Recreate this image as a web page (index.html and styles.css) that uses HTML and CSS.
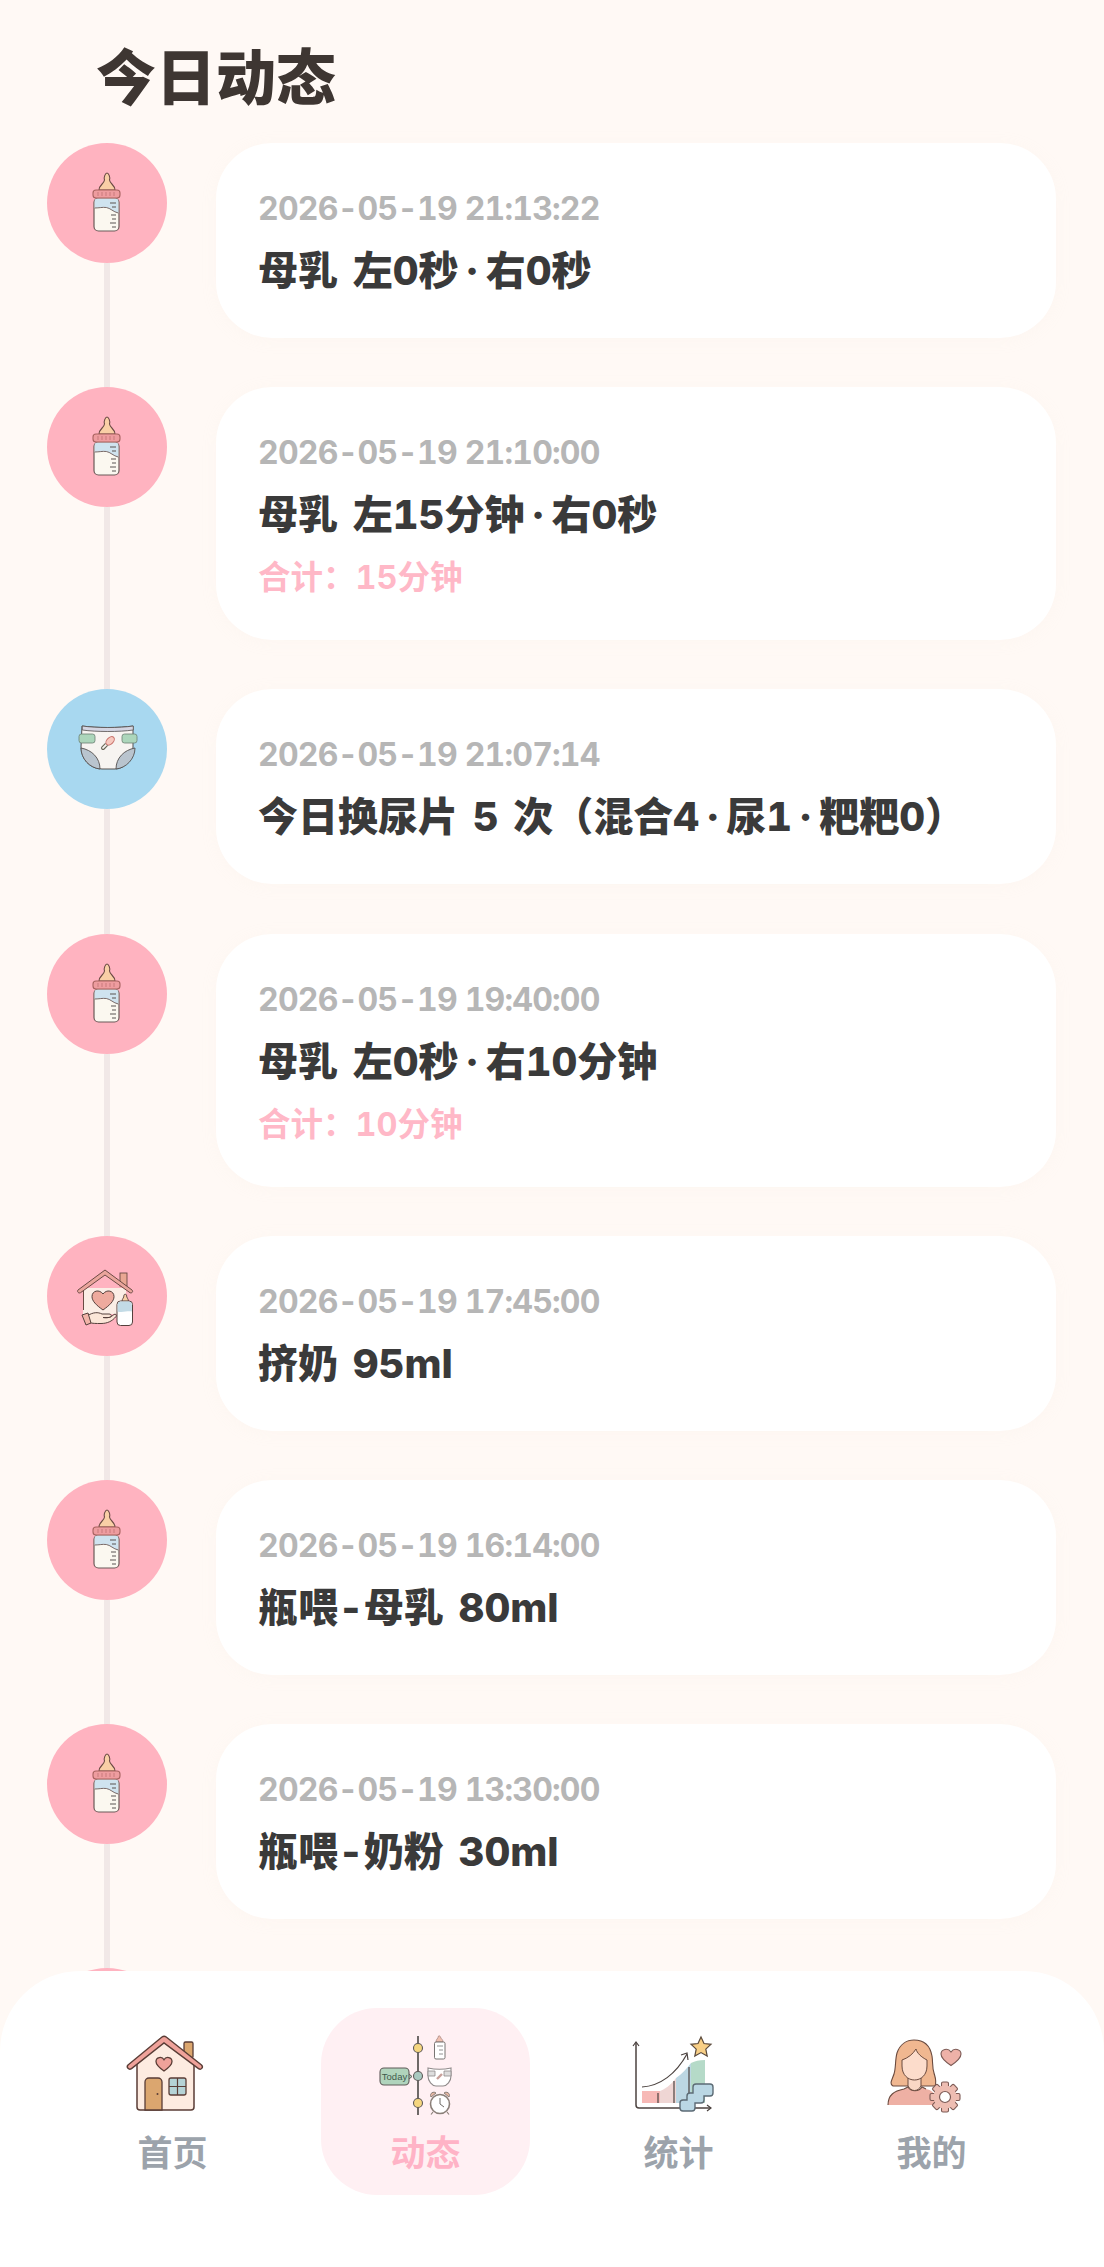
FILE: index.html
```html
<!DOCTYPE html>
<html lang="zh-CN">
<head>
<meta charset="utf-8">
<title>今日动态</title>
<link rel="stylesheet" href="styles.css">
</head>
<body>
<svg class="defs" width="0" height="0" aria-hidden="true">
  <defs>
    <symbol id="bottle" viewBox="0 0 64 64">
      <path d="M24 19c0-5 5-6 5.500-10-1-3 1-7 2.500-7s3.500 4 2.500 7c.5 4 5.500 5 5.500 10z" fill="#f9cfa6" stroke="#6b4a44" stroke-width="1.100"/>
      <rect x="19" y="27" width="25" height="33" rx="4.500" fill="#fbf8f0" stroke="#6b5a58" stroke-width="1.200"/>
      <path d="M19.700 37V30c0-1.500 1-2.500 2.500-2.500h18.600c1.500 0 2.500 1 2.500 2.500v12c-5-1-8-5-12-5.500-4-.5-7 .5-11.600.5z" fill="#cfe3ef"/>
      <path d="M19.700 37c4.600 0 7.600-1 11.600-.5 4 .5 7 4.500 12 5.500" fill="none" stroke="#6b5a58" stroke-width=".9"/>
      <path d="M35 32h6M37 36h4M36 44h5M37 48h4M35 52h6M37 56h4" stroke="#5b5552" stroke-width="1.100"/>
      <rect x="18" y="19" width="27" height="8" rx="3" fill="#ee9c9f" stroke="#a8625f" stroke-width="1.100"/>
      <path d="M23 21v4M27 21v4M31 21v4M35 21v4M39 21v4" stroke="#c97a7c" stroke-width="1"/>
    </symbol>
    <symbol id="diaper" viewBox="0 0 64 64">
      <path d="M7 9c14 2 38 2 51 0v21c0 12-8 22-18 22H27C15 52 6 42 6 30z" fill="#f7f4f1" stroke="#55504f" stroke-width="1"/>
      <path d="M7.300 9c14 2 37 2 51 0v4c-14 2-37 2-51 0z" fill="#d4d5e2" stroke="#55504f" stroke-width=".8"/>
      <path d="M6 31c0 11 9 20 19 21 0-11-8-19-19-21zM60 31c0 11-9 20-19 21 0-11 8-19 19-21z" fill="#b9c4ce" stroke="#55504f" stroke-width=".9"/>
      <rect x="4" y="17" width="16" height="9" rx="2.500" fill="#acd6bb" stroke="#6b7f72" stroke-width=".8"/>
      <rect x="47" y="17" width="15" height="9" rx="2.500" fill="#acd6bb" stroke="#6b7f72" stroke-width=".8"/>
      <g transform="rotate(-45 33 26)" fill="none" stroke="#c9756f" stroke-width="1.100">
        <ellipse cx="36" cy="26" rx="5" ry="3.200" fill="#f7c9bf"/>
        <path d="M31 24.500H26a1.500 1.500 0 0 0 0 3h5" stroke="#665"/>
      </g>
    </symbol>
    <symbol id="pump" viewBox="0 0 64 64">
      <path d="M8 24h43v26H8z" fill="#fbeee6"/>
      <path d="M8.500 26v20" stroke="#6b4a44" stroke-width="1"/>
      <rect x="45" y="9" width="7" height="13" fill="#e9a793" stroke="#6b4a44" stroke-width=".9"/>
      <path d="M3 26 30 6l27 20c1.500 1.400 0 3.600-2 2.700L30 11 5.500 28.700c-2 1-3.800-1.200-2.500-2.700z" fill="#eaa59c" stroke="#6b4a44" stroke-width="1"/>
      <path d="M28 46C21 41 17 37 17 32.500c0-6 7.500-7.500 11-2.500 3.500-5 11-3.500 11 2.500C39 37 35 41 28 46z" fill="#eeaa9e" stroke="#55403c" stroke-width="1"/>
      <path d="M12 52c6-4 11-4 15-2h7c3 0 3 3 .5 3.500H28c5 1 8-.5 11-3 1.500-1 3 .5 2 2-4 5-9 7-15 7-5 0-9 0-12-1z" fill="#fbe6d8" stroke="#55403c" stroke-width="1"/>
      <path d="M7 51l6-2 3 10-5 2z" fill="#f2b4a8" stroke="#55403c" stroke-width="1"/>
      <path d="M47 38c0-4 2-3.500 2-7 0-1 2.500-1 2.500 0 0 3.500 2 3 2 7z" fill="#f9cfa6" stroke="#55403c" stroke-width=".9"/>
      <rect x="42" y="37" width="15.500" height="24.500" rx="3.500" fill="#fff" stroke="#55403c" stroke-width="1"/>
      <path d="M42.600 41c0-2 1-3.400 3-3.400h8.300c2 0 3 1.400 3 3.400v6.500c-4-1-9.500 1.500-14.300 0z" fill="#c3dbe6"/>
    </symbol>
    <symbol id="nav-home" viewBox="0 0 96 96">
      <rect x="59" y="16" width="9" height="16" rx="1.500" fill="#dca76f" stroke="#5a3d36" stroke-width="1.300"/>
      <path d="M12 38l27-24 30 24v43a3 3 0 0 1-3 3H15a3 3 0 0 1-3-3z" fill="#fdebe0" stroke="#5a3d36" stroke-width="1.500"/>
      <path d="M20 84V56a4 4 0 0 1 4-4h9a4 4 0 0 1 4 4v28z" fill="#dba66f" stroke="#5a3d36" stroke-width="1.300"/>
      <circle cx="32.500" cy="68" r="1" fill="#5a3d36"/>
      <rect x="44" y="52" width="17" height="17" rx="2" fill="#b5d3d6" stroke="#5a3d36" stroke-width="1.300"/>
      <path d="M52.500 52v17M44 60.500h17" stroke="#5a3d36" stroke-width="1.200"/>
      <path d="M3 39 37 11c1.500-1.200 2.700-1.200 4.200 0L76.500 39c2.300 2.400-.5 5.400-3 3.600L39 17 6.500 42.600c-2.700 1.800-5.500-1.300-3.500-3.600z" fill="#efa29a" stroke="#5a3d36" stroke-width="1.400"/>
      <path d="M39 45c-5-3.500-8-6-8-9.500 0-4.500 6-5.500 8-1.800 2-3.700 8-2.700 8 1.800 0 3.500-3 6-8 9.500z" fill="#efa29a" stroke="#5a3d36" stroke-width="1.300"/>
    </symbol>
    <symbol id="nav-feed" viewBox="0 0 96 96">
      <path d="M40 10v79" stroke="#5f5a58" stroke-width="1.800"/>
      <circle cx="40" cy="22" r="4.500" fill="#f5d67f" stroke="#5f5a58" stroke-width="1.100"/>
      <circle cx="40" cy="50" r="4.500" fill="#a9c9c0" stroke="#5f5a58" stroke-width="1.100"/>
      <circle cx="40" cy="77" r="4.500" fill="#f5d67f" stroke="#5f5a58" stroke-width="1.100"/>
      <path d="M31 48l3 2.500-3 2.500" fill="#b0d4bc" stroke="#5f5a58" stroke-width="1"/>
      <rect x="2" y="42" width="29" height="17" rx="4" fill="#b0d4bc" stroke="#5f5a58" stroke-width="1.100"/>
      <text x="16.500" y="54" class="today-label" text-anchor="middle">Today</text>
      <path d="M58 16c0-3 2-3 2.500-6 1-.5 2 .5 2 1 .3 2 2.500 2 2.500 5z" fill="#f0c0b0" stroke="#a98a85" stroke-width=".8"/>
      <rect x="56.500" y="16" width="10.500" height="17" rx="1.500" fill="#fff" stroke="#6a6563" stroke-width=".9"/>
      <path d="M59 20h6M61 24h4M61 28h4" stroke="#777" stroke-width=".8"/>
      <path d="M50 42c7 1.500 16 1.500 23 0v8c0 5-4 10-8 10h-7c-4 0-8-5-8-10z" fill="#fff" stroke="#8f8a8a" stroke-width="1.100"/>
      <path d="M50 45h7v5h-7zM66 45h7v5h-7z" fill="#ddd" stroke="#8f8a8a" stroke-width=".8"/>
      <path d="M59 53l5-5" stroke="#c8a09a" stroke-width="2.400"/>
      <circle cx="62" cy="78" r="9.500" fill="#fff" stroke="#8a7f78" stroke-width="1.600"/>
      <path d="M62 72v6l4 3" fill="none" stroke="#6f6a66" stroke-width="1"/>
      <path d="M53 71c-2-4 3-6 5-4zM71 71c2-4-3-6-5-4z" fill="#e8b7a3" stroke="#8a7f78" stroke-width="1"/>
      <path d="M55 86l-2 2.500M69 86l2 2.500" stroke="#8a7f78" stroke-width="1.200"/>
    </symbol>
    <symbol id="nav-stats" viewBox="0 0 96 96">
      <path d="M45 52c6-4 11-10 15-15v40H45z" fill="#bcd7e3"/>
      <path d="M11 65h18v12H11z" fill="#f7b9b6"/>
      <path d="M29 65c5-2 10-5 16-13v25H29z" fill="#efd6d4"/>
      <path d="M60 37c4-2 8-3 14-3v43H60z" fill="#b5dac8"/>
      <path d="M27 67v10M43 55v22M58 41v36" stroke="#4c4340" stroke-width="1.200"/>
      <path d="M5 16v63a3 3 0 0 0 3 3h72" fill="none" stroke="#4c4340" stroke-width="1.500"/>
      <path d="M2 20l3-4 3 4M76 79l4 3-4 3" fill="none" stroke="#4c4340" stroke-width="1.200"/>
      <path d="M11 61c18-1 34-13 45-33" fill="none" stroke="#4c4340" stroke-width="1.200"/>
      <path d="M50 29l6-2 1 7" fill="none" stroke="#4c4340" stroke-width="1.200"/>
      <path d="M70 11l3 6.500 7 .8-5.200 4.800 1.400 7-6.200-3.500-6.200 3.500 1.400-7-5.200-4.800 7-.8z" fill="#f8cf86" stroke="#5b4a3c" stroke-width="1.200"/>
      <path d="M62 61a3 3 0 0 1 3-3h14a3 3 0 0 1 3 3v6a3 3 0 0 1-3 3h-6v4a3 3 0 0 1-3 3h-6v5a3 3 0 0 1-3 3H52a3 3 0 0 1-3-3v-5a3 3 0 0 1 3-3h4v-4a3 3 0 0 1 3-3h3z" fill="#bad7e4" stroke="#5c6b75" stroke-width="1.400"/>
    </symbol>
    <symbol id="nav-me" viewBox="0 0 96 96">
      <path d="M-8 16v56" stroke="#f5f3f2" stroke-width="1.500"/>
      <path d="M9 60c-4-2-1-6 1-12 2-6 1-14 3-21 3-9 10-13 17-13 9 0 16 5 18 16 1 6 0 11 2 17 1 4 3 8 1 13z" fill="#f0b790" stroke="#6a4a3e" stroke-width="1.100"/>
      <path d="M4 79c0-10 6-14 16-16l4-2c3 5 11 5 14 0l4 2c5 1 9 4 10 8l-1 8z" fill="#eeb0a4"/>
      <path d="M4 79c0-10 6-14 16-16l4-2c3 5 11 5 14 0l4 2" fill="none" stroke="#6a4a3e" stroke-width="1.100"/>
      <path d="M24 49h13v11c-3 6-10 6-13 0z" fill="#fad7c5" stroke="#6a4a3e" stroke-width="1"/>
      <path d="M18 34c6-2 11-6 14-11 1 4 5 8 11 11v6c0 9-6 14-12.500 14S18 49 18 40z" fill="#fcdccb" stroke="#6a4a3e" stroke-width="1"/>
      <path d="M67 39.500c-6-4-10-7.500-10-11.500 0-5 7-6.500 10-2 3-4.500 10-3 10 2 0 4-4 7.500-10 11.500z" fill="#eeb1a8" stroke="#7c5a55" stroke-width="1.100"/>
      <g fill="#eebdb2" stroke="#7c5a55" stroke-width="1.100">
        <rect x="57.500" y="56" width="7" height="30" rx="1.500"/>
        <rect x="57.500" y="56" width="7" height="30" rx="1.500" transform="rotate(45 61 71)"/>
        <rect x="57.500" y="56" width="7" height="30" rx="1.500" transform="rotate(90 61 71)"/>
        <rect x="57.500" y="56" width="7" height="30" rx="1.500" transform="rotate(135 61 71)"/>
      </g>
      <circle cx="61" cy="71" r="11.500" fill="#eebdb2"/>
      <circle cx="61" cy="71" r="5.500" fill="#fff" stroke="#7c5a55" stroke-width="1.200"/>
    </symbol>
  </defs>
</svg>

<main class="page">
  <h1 class="page-title">今日动态</h1>
  <ul class="timeline">
    <li class="event">
      <div class="dot dot-pink"><svg class="dot-icon"><use href="#bottle"/></svg></div>
      <div class="card">
        <p class="time">2026-05-19 21:13:22</p>
        <p class="desc">母乳 左0秒<span class="sep">·</span>右0秒</p>
      </div>
    </li>
    <li class="event">
      <div class="dot dot-pink"><svg class="dot-icon"><use href="#bottle"/></svg></div>
      <div class="card">
        <p class="time">2026-05-19 21:10:00</p>
        <p class="desc">母乳 左15分钟<span class="sep">·</span>右0秒</p>
        <p class="total">合计&#xFF1A;15分钟</p>
      </div>
    </li>
    <li class="event">
      <div class="dot dot-blue"><svg class="dot-icon"><use href="#diaper"/></svg></div>
      <div class="card">
        <p class="time">2026-05-19 21:07:14</p>
        <p class="desc">今日换尿片 5 次&#xFF08;混合4<span class="sep">·</span>尿1<span class="sep">·</span>粑粑0&#xFF09;</p>
      </div>
    </li>
    <li class="event">
      <div class="dot dot-pink"><svg class="dot-icon"><use href="#bottle"/></svg></div>
      <div class="card">
        <p class="time">2026-05-19 19:40:00</p>
        <p class="desc">母乳 左0秒<span class="sep">·</span>右10分钟</p>
        <p class="total">合计&#xFF1A;10分钟</p>
      </div>
    </li>
    <li class="event">
      <div class="dot dot-pink"><svg class="dot-icon"><use href="#pump"/></svg></div>
      <div class="card">
        <p class="time">2026-05-19 17:45:00</p>
        <p class="desc">挤奶 95ml</p>
      </div>
    </li>
    <li class="event">
      <div class="dot dot-pink"><svg class="dot-icon"><use href="#bottle"/></svg></div>
      <div class="card">
        <p class="time">2026-05-19 16:14:00</p>
        <p class="desc">瓶喂-母乳 80ml</p>
      </div>
    </li>
    <li class="event">
      <div class="dot dot-pink"><svg class="dot-icon"><use href="#bottle"/></svg></div>
      <div class="card">
        <p class="time">2026-05-19 13:30:00</p>
        <p class="desc">瓶喂-奶粉 30ml</p>
      </div>
    </li>
    <li class="event">
      <div class="dot dot-pink"></div>
    </li>
  </ul>
</main>

<nav class="tabbar">
  <a class="tab"><svg class="tab-icon"><use href="#nav-home"/></svg><span class="tab-label">首页</span></a>
  <a class="tab tab-active"><svg class="tab-icon"><use href="#nav-feed"/></svg><span class="tab-label">动态</span></a>
  <a class="tab"><svg class="tab-icon"><use href="#nav-stats"/></svg><span class="tab-label">统计</span></a>
  <a class="tab"><svg class="tab-icon"><use href="#nav-me"/></svg><span class="tab-label">我的</span></a>
</nav>
</body>
</html>
```

FILE: styles.css
```css
* { box-sizing: border-box; }

html, body {
  margin: 0;
  padding: 0;
  height: 2267px;
  overflow: hidden;
  background: #fff9f5;
  font-family: Inter, "Noto Sans CJK SC", "Noto Sans", sans-serif;
  font-variant-numeric: tabular-nums;
}

.defs { position: absolute; }

.page { padding: 36px 48px 0 47px; }

.page-title {
  margin: 0 0 23px 49px;
  font-size: 60px;
  line-height: 84px;
  font-weight: 900;
  color: #3e3632;
}

.timeline {
  list-style: none;
  margin: 0;
  padding: 0;
  display: flex;
  flex-direction: column;
  gap: 49.200px;
}

.event {
  position: relative;
  display: flex;
  align-items: flex-start;
  gap: 49px;
}

.event::after {
  content: "";
  position: absolute;
  left: 57px;
  top: 120px;
  bottom: -50px;
  width: 6px;
  background: #f1e8e7;
}

.dot {
  flex: none;
  width: 120px;
  height: 120px;
  border-radius: 50%;
  display: flex;
  align-items: center;
  justify-content: center;
}

.dot-pink { background: #ffb3c0; }
.dot-blue { background: #a8d8f0; }

.dot-icon { width: 64px; height: 64px; }

.card {
  flex: 1;
  padding: 42px 42px 39px;
  background: #fff;
  border-radius: 56px;
  box-shadow: 0 2px 16px rgba(240, 225, 218, 0.1);
}

.time, .desc, .total { margin: 0; white-space: nowrap; }

.time {
  font-size: 32px;
  line-height: 48px;
  letter-spacing: -0.800px;
  font-weight: 700;
  color: #b6b6b6;
}

.desc {
  margin-top: 10px;
  font-size: 40px;
  line-height: 56px;
  word-spacing: 4px;
  font-weight: 800;
  color: #3a3a3a;
}

.sep { margin: 0 6.500px; }

.total {
  margin: 13px 0 1px;
  font-size: 32.500px;
  line-height: 44px;
  font-weight: 700;
  color: #ffb8c7;
}

.tabbar {
  position: fixed;
  left: 0;
  right: 0;
  bottom: 0;
  height: 296px;
  padding: 37px 46px 0;
  display: grid;
  grid-template-columns: repeat(4, 1fr);
  align-items: start;
  justify-items: center;
  background: #fff;
  border-radius: 80px 80px 0 0;
}

.tab {
  width: 209px;
  height: 187px;
  padding-top: 18px;
  border-radius: 56px;
  display: flex;
  flex-direction: column;
  align-items: center;
  color: #9ca3ab;
}

.tab-active {
  background: #fff0f3;
  color: #ffb3c6;
}

.tab-icon { width: 96px; height: 96px; overflow: visible; }

.tab-label {
  margin-top: 7px;
  font-size: 35px;
  line-height: 48px;
  font-weight: 700;
}

.today-label {
  font-family: "Liberation Sans", sans-serif;
  font-size: 9.500px;
  fill: #3f5a4c;
}
```
